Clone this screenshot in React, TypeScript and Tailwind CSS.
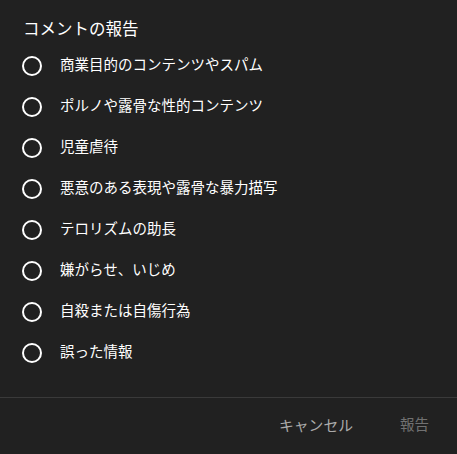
const options = [
  "商業目的のコンテンツやスパム",
  "ポルノや露骨な性的コンテンツ",
  "児童虐待",
  "悪意のある表現や露骨な暴力描写",
  "テロリズムの助長",
  "嫌がらせ、いじめ",
  "自殺または自傷行為",
  "誤った情報",
];

export default function App() {
  return (
    <div
      className="w-[457px] h-[454px] bg-[#212121] flex flex-col"
      style={{ fontFamily: 'Roboto, "Noto Sans CJK JP", sans-serif' }}
    >
      <div className="px-[23px] pt-[18px]">
        <h2 className="text-[16.5px] leading-6 text-white">コメントの報告</h2>
      </div>

      <ul className="mt-[3px] px-[22px]">
        {options.map((label) => (
          <li key={label} className="h-[41px] flex items-center">
            <span className="w-5 h-5 rounded-full border-2 border-white shrink-0" />
            <span className="ml-[18px] text-[14.5px] text-white">{label}</span>
          </li>
        ))}
      </ul>

      <div className="mt-auto border-t border-[#3a3a3a] h-[57px] flex items-center justify-end pr-[28px]">
        <button className="text-[14.8px] text-[#aaaaaa]">キャンセル</button>
        <button className="ml-[47px] text-[14.5px] text-[#717171]">報告</button>
      </div>
    </div>
  );
}
